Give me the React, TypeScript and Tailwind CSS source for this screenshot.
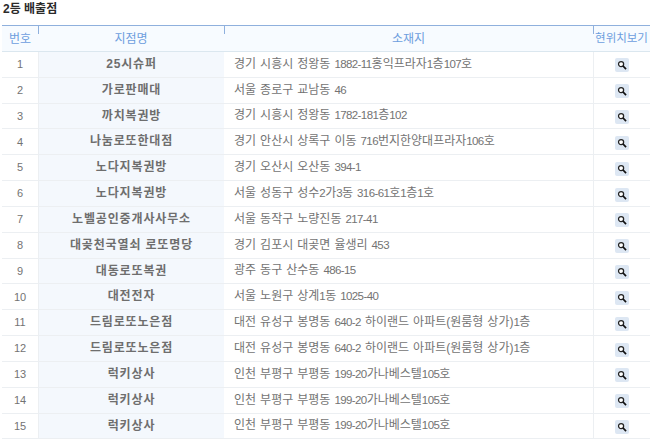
const rows = [
  ["1", "25시슈퍼", "경기 시흥시 정왕동 1882-11홍익프라자1층107호"],
  ["2", "가로판매대", "서울 종로구 교남동 46"],
  ["3", "까치복권방", "경기 시흥시 정왕동 1782-181층102"],
  ["4", "나눔로또한대점", "경기 안산시 상록구 이동 716번지한양대프라자106호"],
  ["5", "노다지복권방", "경기 오산시 오산동 394-1"],
  ["6", "노다지복권방", "서울 성동구 성수2가3동 316-61호1층1호"],
  ["7", "노벨공인중개사사무소", "서울 동작구 노량진동 217-41"],
  ["8", "대곶천국열쇠 로또명당", "경기 김포시 대곶면 율생리 453"],
  ["9", "대동로또복권", "광주 동구 산수동 486-15"],
  ["10", "대전전자", "서울 노원구 상계1동 1025-40"],
  ["11", "드림로또노은점", "대전 유성구 봉명동 640-2 하이랜드 아파트(원룸형 상가)1층"],
  ["12", "드림로또노은점", "대전 유성구 봉명동 640-2 하이랜드 아파트(원룸형 상가)1층"],
  ["13", "럭키상사", "인천 부평구 부평동 199-20가나베스텔105호"],
  ["14", "럭키상사", "인천 부평구 부평동 199-20가나베스텔105호"],
  ["15", "럭키상사", "인천 부평구 부평동 199-20가나베스텔105호"],
];

// digits in the original font are much narrower than the hangul
function Address({ text }: { text: string }) {
  return (
    <span className="-mt-[1px] whitespace-nowrap text-[12px] [word-spacing:0.7px]">
      {text.split(/([0-9-]+)/).map((part, i) =>
        i % 2 === 1 ? (
          <span key={i} className="text-[11.5px] tracking-[-0.6px]">{part}</span>
        ) : (
          part
        )
      )}
    </span>
  );
}

function SearchButton() {
  return (
    <span className="mt-[2px] flex h-[14px] w-[14px] items-center justify-center rounded-[2px] bg-[#dde7f3]">
      <svg width="10" height="10" viewBox="0 0 11 11" fill="none">
        <circle cx="4.5" cy="4.5" r="2.8" fill="#fff" stroke="#222" strokeWidth="1.4" />
        <path d="M6.5 6.5 L10 10" stroke="#111" strokeWidth="1.8" />
      </svg>
    </span>
  );
}

function HeadCell({ className, label, tick }: { className: string; label: string; tick?: boolean }) {
  return (
    <div className={`relative flex items-center justify-center pt-[1px] ${className}`}>
      {tick && <span className="absolute left-0 top-0 h-[8px] w-px bg-[#8fb0dd]" />}
      {label}
    </div>
  );
}

export default function App() {
  return (
    <div className="h-[441px] w-[650px] overflow-hidden bg-white font-['Liberation_Sans','Noto_Sans_CJK_KR',sans-serif] text-[11px] text-[#737373]">
      <h2 className="h-[25px] pl-[3px] pt-[2px] text-[12px] font-bold leading-[14px] text-[#2b2b2b]">2등 배출점</h2>
      <div className="ml-[2px] border-t border-[#8fb0dd]">
        <div className="flex h-[26px] border-b border-[#dbe7ef] bg-[#f7fbff] text-[12px] text-[#6d9ede]">
          <HeadCell className="w-[36px]" label="번호" />
          <HeadCell className="w-[186px]" label="지점명" tick />
          <HeadCell className="w-[369px]" label="소재지" tick />
          <HeadCell className="flex-1 whitespace-nowrap text-[11.5px]" label="현위치보기" tick />
        </div>
        {rows.map((r) => (
          <div key={r[0]} className="flex h-[25.83px] border-b border-[#eceff2]">
            <div className="flex w-[36px] items-center justify-center">{r[0]}</div>
            <div className="flex w-[186px] items-center justify-center border-l border-[#eceff2] bg-[#f4f8fd] pb-[1px] text-[12px] font-bold tracking-[0.85px] text-[#6e6e6e]">
              {r[1]}
            </div>
            <div className="flex w-[369px] items-center pl-[10px]">
              <Address text={r[2]} />
            </div>
            <div className="flex flex-1 items-center justify-center border-l border-[#eceff2]">
              <SearchButton />
            </div>
          </div>
        ))}
      </div>
    </div>
  );
}
